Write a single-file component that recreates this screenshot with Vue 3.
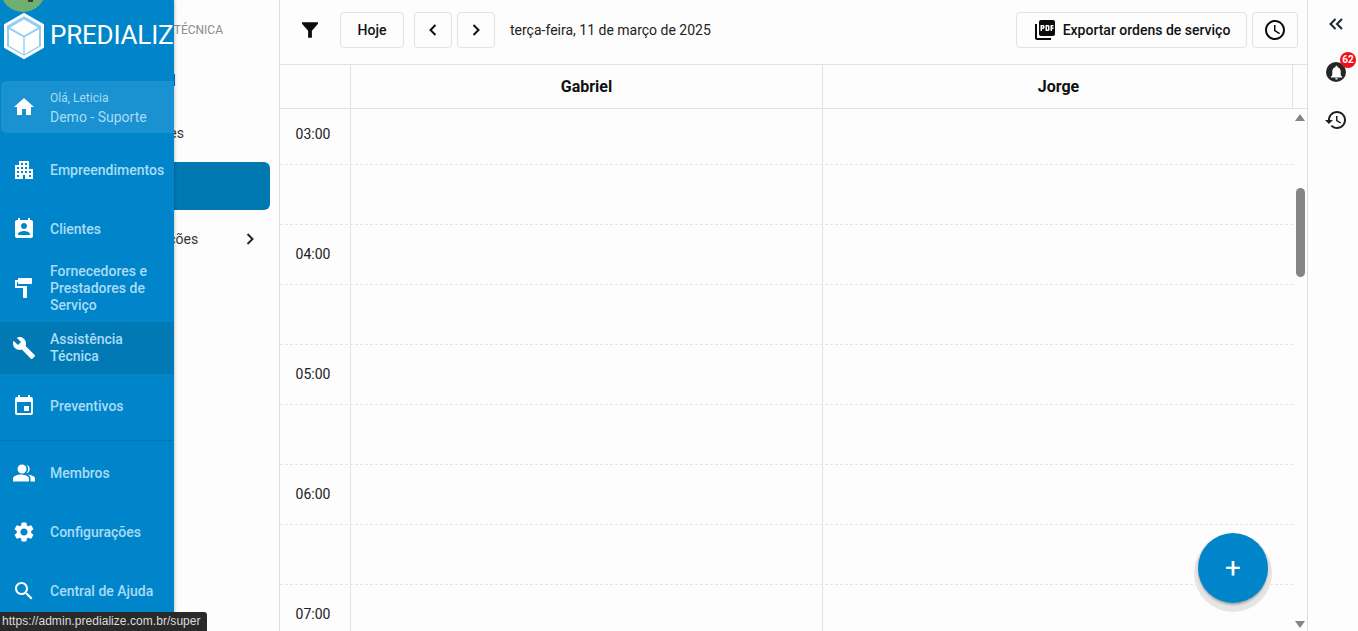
<script setup>
const icons = {
  home: 'M10 20v-6h4v6h5v-8h3L12 3 2 12h3v8z',
  building: 'M17 11V3H7v4H3v14h8v-4h2v4h8V11h-4zM7 19H5v-2h2v2zm0-4H5v-2h2v2zm0-4H5V9h2v2zm4 4H9v-2h2v2zm0-4H9V9h2v2zm0-4H9V5h2v2zm4 8h-2v-2h2v2zm0-4h-2V9h2v2zm0-4h-2V5h2v2zm4 12h-2v-2h2v2zm0-4h-2v-2h2v2z',
  contact: 'M19 3h-1V1h-2v2H8V1H6v2H5c-1.11 0-2 .9-2 2v14c0 1.1.89 2 2 2h14c1.1 0 2-.9 2-2V5c0-1.1-.9-2-2-2zm-7 3c1.66 0 3 1.34 3 3s-1.34 3-3 3-3-1.34-3-3 1.34-3 3-3zm6 12H6v-1c0-2 4-3.1 6-3.1s6 1.1 6 3.1v1z',
  paint: 'M6 4V3c0-.55.45-1 1-1h12c.55 0 1 .45 1 1v4c0 .55-.45 1-1 1H7c-.55 0-1-.45-1-1V6H5v4h10v11c0 .55-.45 1-1 1h-2c-.55 0-1-.45-1-1v-9H3V4h3z',
  build: 'M22.7 19l-9.1-9.1c.9-2.3.4-5-1.5-6.9-2-2-5-2.4-7.4-1.3L9 6 6 9 1.6 4.7C.4 7.1.9 10.1 2.9 12.1c1.9 1.9 4.6 2.4 6.9 1.5l9.1 9.1c.4.4 1 .4 1.4 0l2.3-2.3c.5-.4.5-1.1.1-1.4z',
  event: 'M17 12h-5v5h5v-5zM16 1v2H8V1H6v2H5c-1.11 0-1.99.9-1.99 2L3 19c0 1.1.89 2 2 2h14c1.1 0 2-.9 2-2V5c0-1.1-.9-2-2-2h-1V1h-2zm3 18H5V8h14v11z',
  people: 'M10 12.5a4.5 4.5 0 1 0 0-9 4.5 4.5 0 0 0 0 9zM14.5 3.7a4.5 4.5 0 0 1 0 8.6 6.2 6.2 0 0 0 0-8.6zM1 20.5v-3C1 14.6 6.5 13.5 9 13.5s8 1.1 8 4v3zM15.5 13.5c3 .3 7.5 1.5 7.5 4v3h-4.5v-3c0-1.6-1-3-3-4z',
  settings: 'M19.14 12.94c.04-.3.06-.61.06-.94 0-.32-.02-.64-.07-.94l2.03-1.58c.18-.14.23-.41.12-.61l-1.92-3.32c-.12-.22-.37-.29-.59-.22l-2.39.96c-.5-.38-1.03-.7-1.62-.94l-.36-2.54c-.04-.24-.24-.41-.48-.41h-3.84c-.24 0-.43.17-.47.41l-.36 2.54c-.59.24-1.13.57-1.62.94l-2.39-.96c-.22-.08-.47 0-.59.22L2.74 8.87c-.12.21-.08.47.12.61l2.03 1.58c-.05.3-.09.63-.09.94s.02.64.07.94l-2.03 1.58c-.18.14-.23.41-.12.61l1.92 3.32c.12.22.37.29.59.22l2.39-.96c.5.38 1.03.7 1.62.94l.36 2.54c.05.24.24.41.48.41h3.84c.24 0 .44-.17.47-.41l.36-2.54c.59-.24 1.13-.56 1.62-.94l2.39.96c.22.08.47 0 .59-.22l1.92-3.32c.12-.22.07-.47-.12-.61l-2.01-1.58zM12 15.6c-1.98 0-3.6-1.62-3.6-3.6s1.62-3.6 3.6-3.6 3.6 1.62 3.6 3.6-1.62 3.6-3.6 3.6z',
  search: 'M15.5 14h-.79l-.28-.27C15.41 12.59 16 11.11 16 9.5 16 5.91 13.09 3 9.5 3S3 5.91 3 9.5 5.91 16 9.5 16c1.61 0 3.09-.59 4.23-1.57l.27.28v.79l5 4.99L20.49 19l-4.99-5zm-6 0C7.01 14 5 11.99 5 9.5S7.01 5 9.5 5 14 7.01 14 9.5 11.99 14 9.5 14z',
}
const navTop = [
  { icon: 'building', label: 'Empreendimentos', cls: 'first' },
  { icon: 'contact', label: 'Clientes' },
  { icon: 'paint', label: 'Fornecedores e Prestadores de Serviço' },
  { icon: 'build', label: 'Assistência Técnica', cls: 'active' },
  { icon: 'event', label: 'Preventivos', cls: 'after-active' },
]
const navBottom = [
  { icon: 'people', label: 'Membros' },
  { icon: 'settings', label: 'Configurações' },
  { icon: 'search', label: 'Central de Ajuda' },
]
const rows = ['03:00', '', '04:00', '', '05:00', '', '06:00', '', '07:00']
</script>

<template>
  <div class="app">
    <section class="submenu">
      <div class="submenu-title">TÉCNICA</div>
      <div class="tick"></div>
      <div class="sub-item">Solicitações</div>
      <div class="sub-item selected">Agenda</div>
      <div class="sub-item">
        <span>Configurações</span>
        <svg class="sub-chevron" viewBox="0 0 12 14" width="12" height="14"><path d="M3.5 2l5 5-5 5" fill="none" stroke="#1c2733" stroke-width="2"/></svg>
      </div>
    </section>

    <main class="main">
      <header class="toolbar">
        <svg class="filter" viewBox="0.5 1 17 16.5" width="16" height="16"><path d="M0.5 1h17v1.6L11 10v7.5H7V10L0.5 2.6z" fill="#0b0b0b"/></svg>
        <button class="btn today">Hoje</button>
        <button class="btn nav-btn">
          <svg viewBox="0 0 12 14" width="12" height="14"><path d="M8.5 2l-5 5 5 5" fill="none" stroke="#111" stroke-width="2"/></svg>
        </button>
        <button class="btn nav-btn next">
          <svg viewBox="0 0 12 14" width="12" height="14"><path d="M3.5 2l5 5-5 5" fill="none" stroke="#111" stroke-width="2"/></svg>
        </button>
        <span class="date">terça-feira, 11 de março de 2025</span>
        <button class="btn export">
          <svg viewBox="0 0 24 24" width="24" height="24"><path fill="#0b0b0b" d="M20 2H8c-1.1 0-2 .9-2 2v12c0 1.1.9 2 2 2h12c1.1 0 2-.9 2-2V4c0-1.1-.9-2-2-2zm-8.5 7.5c0 .83-.67 1.5-1.5 1.5H9v2H7.5V7H10c.83 0 1.5.67 1.5 1.5v1zm5 2c0 .83-.67 1.5-1.5 1.5h-2.5V7H15c.83 0 1.5.67 1.5 1.5v3zm4-3H19v1h1.5V11H19v2h-1.5V7h3v1.5zM9 9.5h1v-1H9v1zM4 6H2v14c0 1.1.9 2 2 2h14v-2H4V6zm10 5.5h1v-3h-1v3z"/></svg>
          <span>Exportar ordens de serviço</span>
        </button>
        <button class="btn clock">
          <svg viewBox="0 0 24 24" width="24" height="24"><path fill="#0b0b0b" d="M11.99 2C6.47 2 2 6.48 2 12s4.47 10 9.99 10C17.52 22 22 17.52 22 12S17.52 2 11.99 2zM12 20c-4.42 0-8-3.58-8-8s3.58-8 8-8 8 3.58 8 8-3.58 8-8 8zm.5-13H11v6l5.25 3.15.75-1.23-4.5-2.67z"/></svg>
        </button>
      </header>

      <div class="col-head">
        <div class="cell"></div>
        <div class="cell">Gabriel</div>
        <div class="cell jorge">Jorge</div>
      </div>

      <div class="body">
        <div class="rows">
          <div v-for="(t, i) in rows" :key="i" class="row">
            <div class="time">{{ t }}</div>
            <div class="slot"></div>
            <div class="slot last"></div>
          </div>
        </div>
        <div class="scrollbar">
          <span class="arrow up"></span>
          <span class="thumb"></span>
          <span class="arrow down"></span>
        </div>
      </div>

      <button class="fab">+</button>
    </main>

    <aside class="rail">
      <svg viewBox="0 0 14 12" width="14" height="12"><path d="M6.5 1L1.5 6l5 5M13 1L8 6l5 5" fill="none" stroke="#1c2733" stroke-width="2"/></svg>
      <div class="bell">
        <svg viewBox="0 0 24 24" width="17" height="17"><path fill="#fff" d="M12 22c1.1 0 2-.9 2-2h-4c0 1.1.89 2 2 2zm6-6v-5c0-3.07-1.64-5.64-4.5-6.32V4c0-.83-.67-1.5-1.5-1.5s-1.5.67-1.5 1.5v.68C7.63 5.36 6 7.92 6 11v5l-2 2v1h16v-1l-2-2z"/></svg>
        <span class="badge">62</span>
      </div>
      <svg class="history" viewBox="0 0 24 24" width="24" height="24"><path fill="#1f1f1f" d="M13 3c-4.97 0-9 4.03-9 9H1l3.89 3.89.07.14L9 12H6c0-3.87 3.13-7 7-7s7 3.13 7 7-3.13 7-7 7c-1.93 0-3.68-.79-4.94-2.06l-1.42 1.42C8.27 19.99 10.51 21 13 21c4.97 0 9-4.03 9-9s-4.03-9-9-9zm-1 5v5l4.28 2.54.72-1.21-3.5-2.08V8H12z"/></svg>
    </aside>

    <nav class="sidebar">
      <div class="avatar"><span class="avatar-mark"></span></div>
      <div class="brand">
        <svg viewBox="0 0 40 46" width="40" height="46">
          <path d="M20 1.5L38.5 12v22L20 44.5 1.5 34V12z" fill="#8fd0f2" stroke="#fff" stroke-width="3"/>
          <path d="M20 6.5L34 14.5 20 22.5 6 14.5z" fill="#fff"/>
          <path d="M5 16.3l14.3 8V41L5 32.8z" fill="#fff"/>
          <path d="M35 16.3l-14.3 8V41L35 32.8z" fill="#fff"/>
        </svg>
        <span class="brand-name">PREDIALIZ</span>
      </div>
      <a class="nav-item home">
        <svg viewBox="0 0 24 24" width="24" height="24"><path fill="#fff" :d="icons.home"/></svg>
        <span class="home-text"><small>Olá, Leticia</small><span>Demo - Suporte</span></span>
      </a>
      <a v-for="n in navTop" :key="n.label" class="nav-item" :class="n.cls">
        <svg viewBox="0 0 24 24" width="24" height="24"><path fill="#fff" :d="icons[n.icon]"/></svg>
        <span>{{ n.label }}</span>
      </a>
      <div class="divider"></div>
      <a v-for="n in navBottom" :key="n.label" class="nav-item">
        <svg viewBox="0 0 24 24" width="24" height="24"><path fill="#fff" :d="icons[n.icon]"/></svg>
        <span>{{ n.label }}</span>
      </a>
    </nav>

    <div class="status">https://admin.predialize.com.br/super</div>
  </div>
</template>

<style scoped>
.app {
  position: relative;
  display: flex;
  width: 1358px;
  height: 631px;
  overflow: hidden;
  background: #fdfdfd;
  font-family: Roboto, "Liberation Sans", sans-serif;
  font-size: 14px;
  color: #1a1a1a;
}
.submenu {
  width: 280px;
  flex: none;
  box-sizing: border-box;
  border-right: 1px solid #dedede;
  padding-right: 9px;
}
.submenu-title {
  height: 60px;
  line-height: 60px;
  padding-right: 47px;
  text-align: right;
  font-size: 12px;
  color: #8b8b8b;
}
.tick {
  width: 175px;
  height: 12px;
  margin-top: 14px;
  background: #0f6fc0;
}
.sub-item {
  display: flex;
  align-items: center;
  justify-content: space-between;
  height: 48px;
  padding: 0 14px 0 108px;
  color: #333;
}
.sub-item:nth-of-type(3) {
  margin-top: 23px;
}
.sub-item.selected {
  margin-top: 5px;
  background: #0079b3;
  color: #fff;
  border-radius: 6px;
}
.sub-item:last-child {
  margin-top: 5px;
}
.sub-chevron {
  flex: none;
}
.main {
  position: relative;
  display: flex;
  flex-direction: column;
  flex: 1;
  min-width: 0;
}
.toolbar {
  display: flex;
  align-items: center;
  flex: none;
  height: 65px;
  box-sizing: border-box;
  padding: 0 9px 5px 22px;
  border-bottom: 1px solid #e2e2e2;
}
.filter {
  flex: none;
  margin-right: 22px;
}
.btn {
  display: inline-flex;
  align-items: center;
  justify-content: center;
  height: 36px;
  box-sizing: border-box;
  padding: 0;
  background: #fdfdfd;
  border: 1px solid #e2e2e2;
  border-radius: 4px;
  font: 500 14px Roboto, sans-serif;
  color: #111;
}
.today {
  width: 64px;
}
.nav-btn {
  width: 38px;
  margin-left: 10px;
}
.nav-btn.next {
  margin-left: 5px;
}
.date {
  margin-left: 15px;
  flex: 1;
  color: #222;
}
.export {
  width: 231px;
  gap: 6px;
}
.clock {
  width: 46px;
  margin-left: 5px;
}
.col-head {
  display: grid;
  grid-template-columns: 71px 472px 470px 14px;
  flex: none;
  height: 44px;
  border-bottom: 1px solid #e2e2e2;
  box-sizing: border-box;
}
.cell {
  display: flex;
  align-items: center;
  justify-content: center;
  border-right: 1px solid #e2e2e2;
  font-size: 16px;
  font-weight: 700;
  color: #111;
}
.cell.jorge {
  padding-left: 2px;
}
.body {
  display: flex;
  flex: 1;
  min-height: 0;
  overflow: hidden;
}
.rows {
  flex: none;
  width: 1013px;
  margin-top: -4px;
}
.row {
  display: grid;
  grid-template-columns: 71px 472px 470px;
  height: 60px;
  box-sizing: border-box;
  border-bottom: 1px dashed #e4e4e4;
}
.time {
  display: flex;
  align-items: center;
  justify-content: center;
  padding: 0 4px 2px 0;
  border-right: 1px solid #e2e2e2;
  color: #222;
}
.slot {
  border-right: 1px solid #e2e2e2;
}
.slot.last {
  border-right: 0;
}
.scrollbar {
  display: flex;
  flex-direction: column;
  align-items: center;
  flex: none;
  width: 14px;
}
.arrow {
  flex: none;
  width: 0;
  height: 0;
  border-left: 5px solid transparent;
  border-right: 5px solid transparent;
}
.arrow.up {
  margin-top: 5px;
  border-bottom: 7px solid #858585;
}
.arrow.down {
  margin-top: auto;
  margin-bottom: 3px;
  border-top: 7px solid #858585;
}
.thumb {
  flex: none;
  width: 9px;
  height: 89px;
  margin-top: 67px;
  border-radius: 5px;
  background: #858585;
}
.fab {
  position: absolute;
  left: 918px;
  top: 533px;
  width: 70px;
  height: 70px;
  padding: 0;
  border: 0;
  border-radius: 50%;
  background: #0085ca;
  color: #fff;
  font: 400 28px/66px Roboto, sans-serif;
  box-shadow: 0 2px 2px rgba(0, 0, 0, 0.25), 0 5px 0 4px #e5e5e5;
}
.rail {
  display: flex;
  flex-direction: column;
  align-items: center;
  flex: none;
  width: 51px;
  box-sizing: border-box;
  border-left: 1px solid #dcdcdc;
  padding: 18px 0 0 6px;
}
.bell {
  position: relative;
  display: flex;
  align-items: center;
  justify-content: center;
  width: 20px;
  height: 20px;
  margin-top: 32px;
  border-radius: 50%;
  background: #262626;
}
.badge {
  position: absolute;
  left: 14px;
  top: -10px;
  width: 16px;
  height: 16px;
  border-radius: 50%;
  background: #f20d17;
  color: #fff;
  font-size: 10px;
  font-weight: 700;
  line-height: 16px;
  text-align: center;
}
.history {
  margin-top: 26px;
}
.sidebar {
  position: absolute;
  left: 0;
  top: 0;
  display: flex;
  flex-direction: column;
  width: 174px;
  height: 631px;
  overflow: hidden;
  background: #0085ca;
  box-shadow: 1px 0 3px rgba(0, 0, 0, 0.2);
  color: #a9dcf6;
}
.avatar {
  position: absolute;
  left: 0;
  top: -34px;
  width: 46px;
  height: 46px;
  border-radius: 50%;
  background: #6db070;
}
.avatar-mark {
  position: absolute;
  left: 28px;
  top: 34px;
  width: 5px;
  height: 2px;
  background: #3a3a3a;
}
.brand {
  display: flex;
  align-items: flex-start;
  flex: none;
  height: 81px;
  box-sizing: border-box;
  padding: 13px 0 0 4px;
  gap: 6px;
  white-space: nowrap;
}
.brand svg {
  flex: none;
}
.brand-name {
  font-size: 26px;
  font-weight: 400;
  line-height: 44px;
  letter-spacing: -0.2px;
  color: #fff;
}
.nav-item {
  display: flex;
  align-items: center;
  flex: none;
  gap: 14px;
  min-height: 52px;
  margin-bottom: 7px;
  padding-left: 12px;
  font-weight: 500;
  line-height: 17px;
}
.nav-item svg {
  flex: none;
}
.home {
  margin-left: 1px;
  padding-left: 11px;
  background: #1a91d0;
  border-radius: 5px 0 0 5px;
}
.home-text {
  display: flex;
  flex-direction: column;
  gap: 3px;
  padding-top: 1px;
  font-weight: 400;
}
.home-text small {
  font-size: 12px;
  line-height: 16px;
}
.first {
  margin-top: 4px;
}
.active {
  background: #0079b5;
  margin-top: 1px;
  margin-bottom: 6px;
}
.after-active {
  margin-bottom: 0;
}
.divider {
  flex: none;
  height: 1px;
  margin: 8px 0 6px;
  background: #0075b3;
}
.status {
  position: absolute;
  left: 0;
  bottom: 0;
  width: 207px;
  height: 19px;
  box-sizing: border-box;
  padding-left: 2px;
  border-top-right-radius: 3px;
  background: #2a2a2a;
  color: #dcdcdc;
  font: 12px/19px "Liberation Sans", sans-serif;
  letter-spacing: 0.05px;
  white-space: nowrap;
  overflow: hidden;
}
</style>
